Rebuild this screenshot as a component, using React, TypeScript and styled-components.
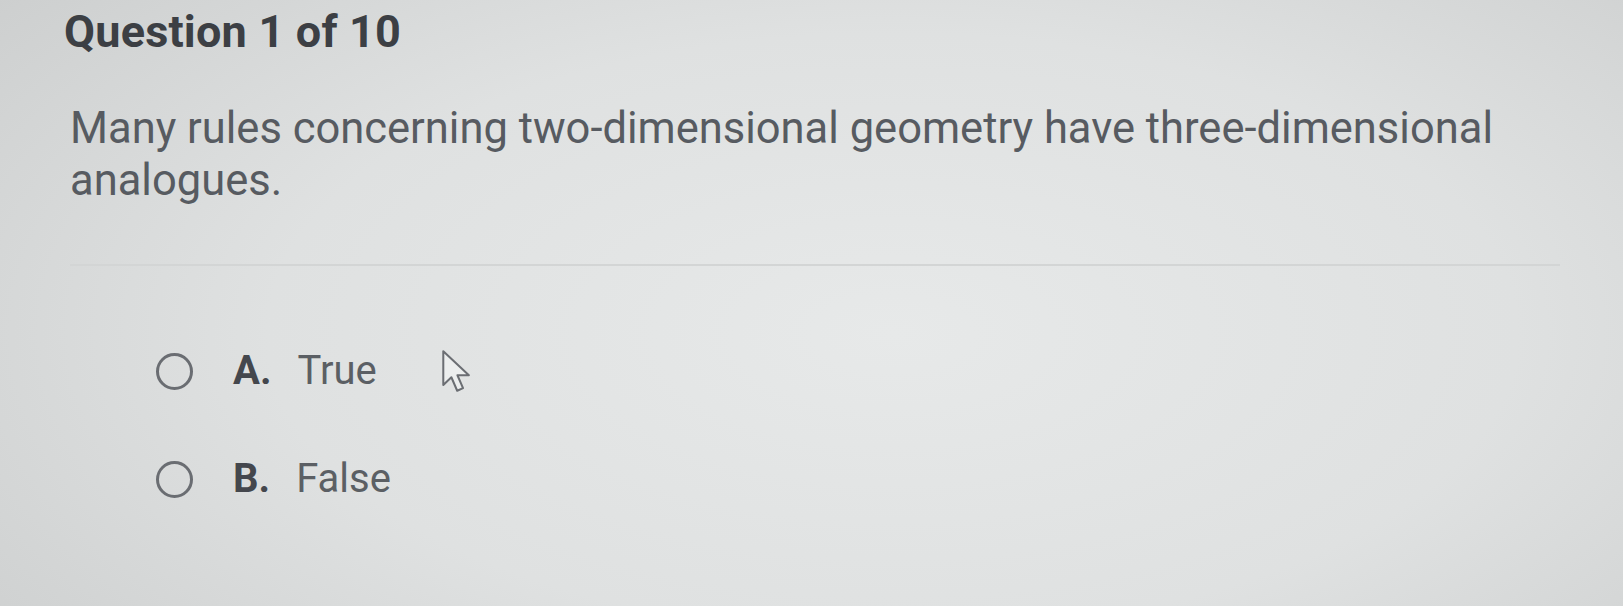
import React from "react";
import styled, { createGlobalStyle } from "styled-components";

const GlobalStyle = createGlobalStyle`
  html, body {
    margin: 0;
    padding: 0;
    width: 100%;
    height: 100%;
  }
  #root {
    height: 100%;
  }
`;

const Screen = styled.div`
  width: 1623px;
  height: 606px;
  overflow: hidden;
  box-sizing: border-box;
  padding: 4px 0 0 64px;
  font-family: Roboto, "Liberation Sans", sans-serif;
  background:
    radial-gradient(ellipse 70% 90% at 55% 55%, #e7e9e9 0%, #dfe1e1 55%, #cdcfcf 100%);
`;

const Title = styled.h1`
  margin: 0;
  font-size: 45px;
  line-height: 56px;
  font-weight: 700;
  letter-spacing: 0.2px;
  color: #3c3f44;
`;

const Prompt = styled.p`
  margin: 43px 0 0 6px;
  width: 1500px;
  font-size: 43.5px;
  line-height: 52px;
  font-weight: 400;
  color: #575b61;
`;

const Divider = styled.hr`
  margin: 57px 0 0 6px;
  width: 1490px;
  border: none;
  border-top: 2px solid #d3d5d5;
`;

const Options = styled.div`
  display: flex;
  flex-direction: column;
  gap: 52px;
  margin: 77px 0 0 92px;
`;

const Option = styled.label`
  display: flex;
  align-items: center;
  gap: 40px;
  font-size: 40px;
  line-height: 56px;
  color: #5b5f64;
  cursor: pointer;
`;

const Radio = styled.span`
  width: 37px;
  height: 37px;
  border-radius: 50%;
  border: 3.5px solid #6a6d72;
  box-sizing: border-box;
  flex-shrink: 0;
`;

const Letter = styled.span`
  font-weight: 700;
  color: #44474d;
  margin-right: 26px;
`;

const OptionRow = styled.div`
  display: flex;
  align-items: center;
  gap: 64px;
`;

const Cursor = () => (
  <svg width="36" height="46" viewBox="0 0 16 20.5" style={{ marginTop: 2 }}>
    <path
      d="M1 1 L1 16 L4.6 12.6 L7.2 18.6 L9.8 17.4 L7.3 11.7 L12.4 11.7 Z"
      fill="#eceeee"
      stroke="#6b6e73"
      strokeWidth="0.9"
      strokeLinejoin="round"
    />
  </svg>
);

export default function App() {
  return (
    <>
      <GlobalStyle />
      <Screen>
        <Title>Question 1 of 10</Title>
        <Prompt>
          Many rules concerning two-dimensional geometry have three-dimensional
          analogues.
        </Prompt>
        <Divider />
        <Options>
          <OptionRow>
            <Option>
              <Radio />
              <span>
                <Letter>A.</Letter>True
              </span>
            </Option>
            <Cursor />
          </OptionRow>
          <Option>
            <Radio />
            <span>
              <Letter>B.</Letter>False
            </span>
          </Option>
        </Options>
      </Screen>
    </>
  );
}
